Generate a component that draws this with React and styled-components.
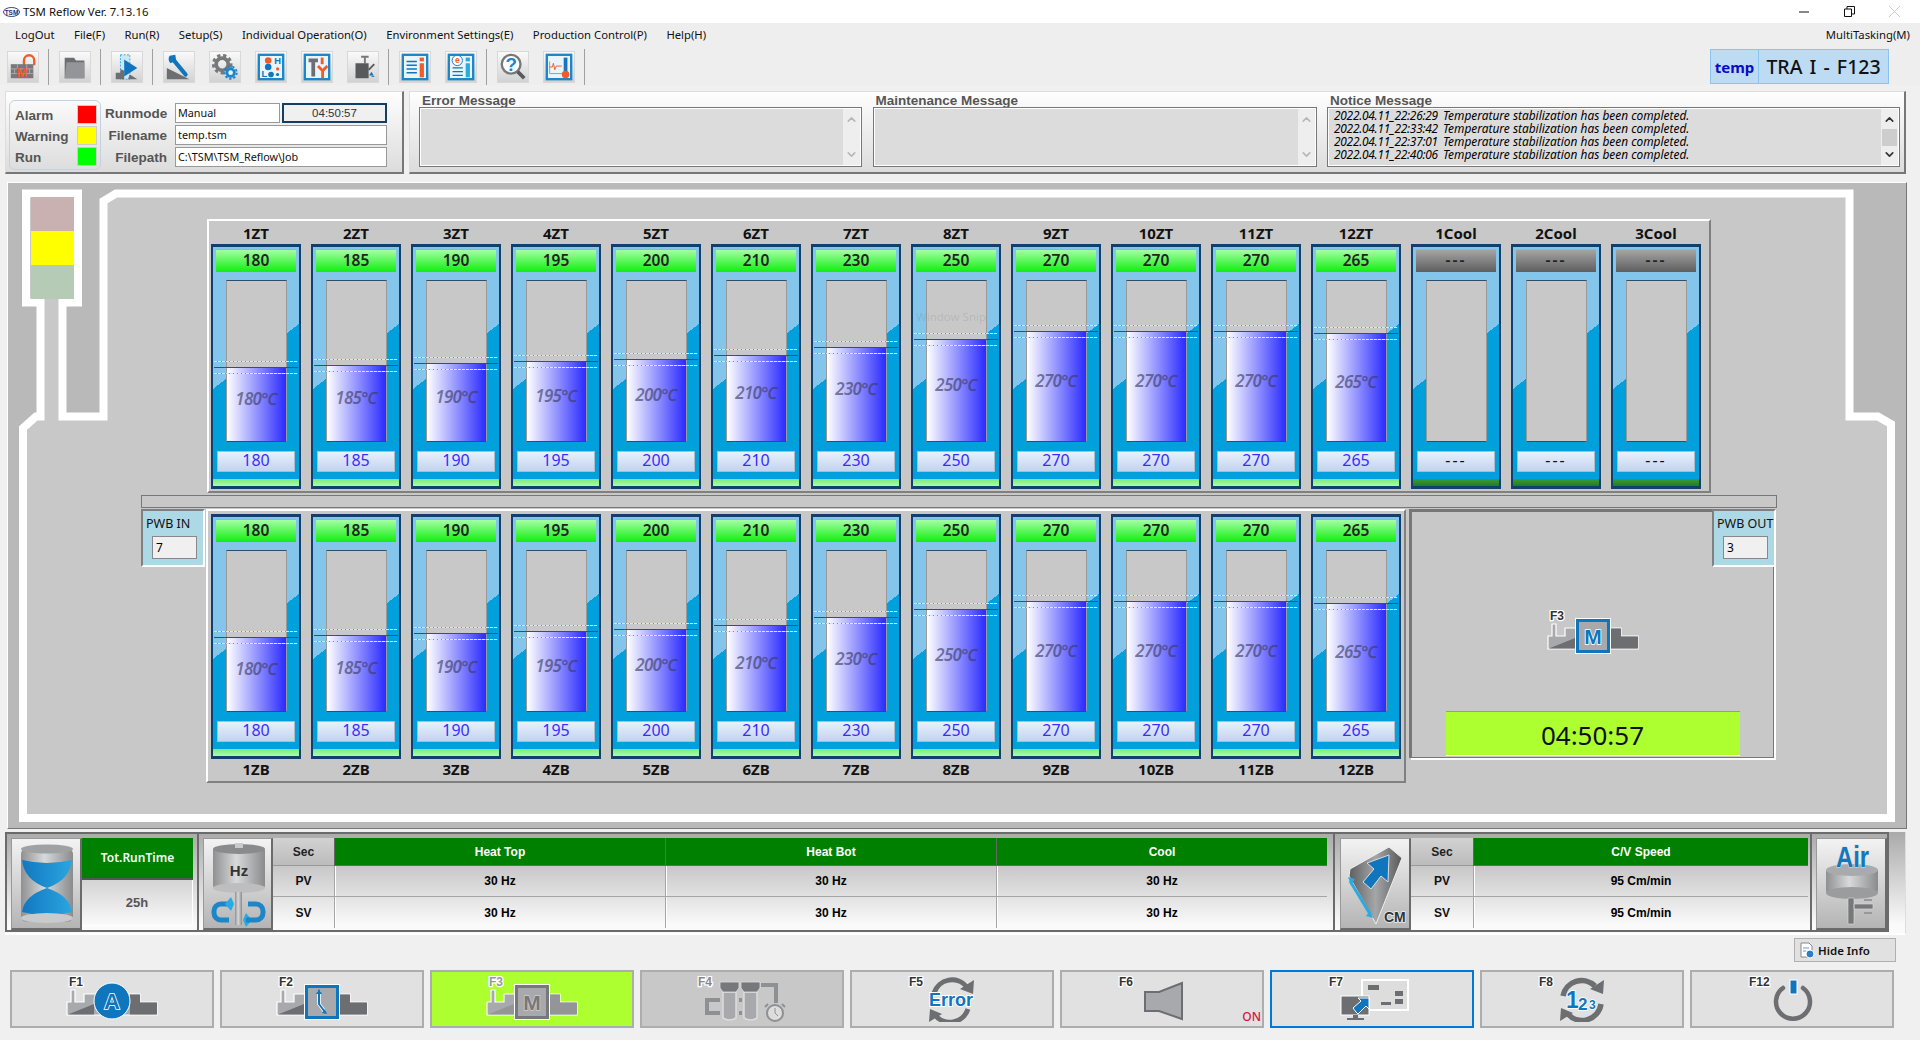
import React from 'react'
import styled, { createGlobalStyle } from 'styled-components'
import { ChevronUp, ChevronDown } from 'lucide-react'

const ui = `"Noto Sans", "Noto Sans CJK SC", sans-serif`
const arial = `"Liberation Sans", Arial, sans-serif`

const GlobalStyle = createGlobalStyle`
  html, body { margin: 0; padding: 0; background: #f0f0f0; }
  body { width: 1920px; height: 1040px; overflow: hidden; font-family: ${ui}; }
  * { box-sizing: border-box; }
`

const menus = ['LogOut', 'File(F)', 'Run(R)', 'Setup(S)', 'Individual Operation(O)', 'Environment Settings(E)', 'Production Control(P)', 'Help(H)']
const temps = [180, 185, 190, 195, 200, 210, 230, 250, 270, 270, 270, 265]
const notices = ['2022.04.11_22:26:29', '2022.04.11_22:33:42', '2022.04.11_22:37:01', '2022.04.11_22:40:06']

/* toolbar drawings */
const Frame = ({ children }) => (
  <>
    <rect x="3" y="3" width="26" height="26" fill="#e9f4fb" stroke="#1c86c8" strokeWidth="2.5" />
    {children}
  </>
)
const toolIcons = [
  <><path d="M17 14V9a5.5 5.5 0 0 1 11 0v5" fill="none" stroke="#f15a29" strokeWidth="2.5" /><rect x="3" y="13" width="24" height="15" fill="#77787b" /><path d="M3 18h24M3 23h24M10 13v5M20 13v5M7 18v5M23 18v5" stroke="#aaa" /><text x="15" y="27" textAnchor="middle" fontFamily={arial} fontWeight="700" fontSize="14" fill="#f15a29">M</text></>,
  <><path d="M5 6h10l2 3h9v19H5z" fill="#6d6e71" /><path d="M7 11h19v17H5z" fill="#939598" /></>,
  <><rect x="9" y="3" width="10" height="26" fill="#cfe6f5" stroke="#29abe2" strokeDasharray="2 1.5" /><path d="M4 29v-7h5v-4l4 2v9z" fill="#6d6e71" /><path d="M19 24l8 5H17z" fill="#6d6e71" /><path d="M13 8l14 9-14 9z" fill="#0f75bc" /></>,
  <><path d="M3 29V17l24 12z" fill="#6d6e71" /><path d="M9 7l14 17" stroke="#0f75bc" strokeWidth="4.5" strokeLinecap="round" /><path d="M6 4a6 6 0 0 0 1 8l6-3-1-6z" fill="#0f75bc" /></>,
  <><circle cx="13" cy="13" r="6.5" fill="none" stroke="#77787b" strokeWidth="4" /><circle cx="13" cy="13" r="9.5" fill="none" stroke="#77787b" strokeWidth="3" strokeDasharray="3.5 3" /><circle cx="22" cy="22" r="4" fill="#e9f4fb" stroke="#1c86c8" strokeWidth="3" /><circle cx="22" cy="22" r="6.5" fill="none" stroke="#1c86c8" strokeWidth="2" strokeDasharray="2.5 2" /></>,
  <Frame><circle cx="13" cy="9" r="3.5" fill="#f15a29" /><circle cx="13" cy="16" r="3.5" fill="#0f75bc" /><text x="23" y="13" textAnchor="middle" fontFamily={arial} fontWeight="700" fontSize="10" fill="#0f75bc">H</text><text x="9" y="27" textAnchor="middle" fontFamily={arial} fontWeight="700" fontSize="10" fill="#0f75bc">L</text><circle cx="16" cy="24" r="3" fill="#0f75bc" /><circle cx="23" cy="18" r="1.7" fill="#f15a29" /><circle cx="23" cy="24" r="1.7" fill="#0f75bc" /></Frame>,
  <Frame><path d="M7 7h10v4h-3v15h-4V11H7z" fill="#6d6e71" /><path d="M20 6h3v7h-3z" fill="#f15a29" /><path d="M17 15l5 5 5-5M22 20v8" fill="none" stroke="#f15a29" strokeWidth="3" /></Frame>,
  <><path d="M14 4h8v2h-3v6h-2V6h-3z" fill="#77787b" /><rect x="8" y="12" width="14" height="16" fill="#58595b" /><path d="M22 19l6-6" stroke="#58595b" strokeWidth="2" /><path d="M25 21l2.5 4h-5z" fill="#0f75bc" /><path d="M25 26h3" stroke="#0f75bc" /></>,
  <Frame><path d="M7 10h11M7 14h11M7 18h11M7 22h11" stroke="#0f75bc" strokeWidth="1.6" /><rect x="21" y="12" width="4.5" height="15" fill="#f15a29" /><rect x="21" y="6" width="4.5" height="4" fill="#f15a29" /></Frame>,
  <Frame><path d="M7 17h11M7 21h11M7 25h11" stroke="#0f75bc" strokeWidth="1.3" /><circle cx="12" cy="9" r="5.5" fill="#fff" stroke="#0f75bc" /><text x="12" y="12" textAnchor="middle" fontFamily={arial} fontWeight="700" fontSize="9" fill="#f15a29">e</text><rect x="21" y="12" width="4.5" height="15" fill="#29abe2" /><rect x="21" y="6" width="4.5" height="4" fill="#29abe2" /></Frame>,
  <><circle cx="14" cy="13" r="10" fill="#fff" stroke="#77787b" strokeWidth="2.5" /><path d="M21 21l7 7" stroke="#58595b" strokeWidth="4" /><text x="14" y="20" textAnchor="middle" fontFamily={arial} fontWeight="700" fontSize="20" fill="#1c86c8">?</text></>,
  <Frame><path d="M6 23h14M6 10v13" stroke="#999" /><path d="M6 16h3l1-4 1.5 7 1.5-4h6" fill="none" stroke="#f15a29" /><rect x="21" y="6" width="4" height="16" fill="#1c75bc" /><circle cx="23" cy="24" r="4" fill="#f15a29" /></Frame>,
]

const Silhouette = ({ light = '#a7a9ac', dark = '#6d6e71' }) => (
  <>
    <path d="M1 39V26h4V14h4v12h9v-8h56v8h17v13z" fill={light} stroke="#fff" strokeWidth="1.2" />
    <path d="M2 38.5L28 28v10.5z" fill={dark} />
    <path d="M64 18.5h10v8h17v12H64z" fill={dark} />
  </>
)
const KeyText = ({ x = 3, fill = '#333', children }) => (
  <text x={x} y="10" fontFamily={arial} fontWeight="700" fontSize="12" fill={fill} stroke="#fff" strokeWidth="2.5" paintOrder="stroke">{children}</text>
)
const IconBox = ({ stroke = '#0f75bc', fill = '#a7a9ac', children }) => (
  <>
    <rect x="28" y="8" width="36" height="36" fill="#fff" />
    <rect x="30.5" y="10.5" width="31" height="31" fill={fill} stroke={stroke} strokeWidth="3" />
    {children}
  </>
)
const KeySvg = ({ children }) => <svg width="92" height="46" viewBox="0 0 92 46">{children}</svg>

const ManualIcon = () => (
  <KeySvg>
    <KeyText>F3</KeyText>
    <Silhouette />
    <IconBox><text x="46" y="34" textAnchor="middle" fontFamily={arial} fontWeight="700" fontSize="21" fill="#0f75bc" stroke="#fff" strokeWidth="1.5" paintOrder="stroke">M</text></IconBox>
  </KeySvg>
)

const fkeys = [
  { id: 'F1', icon: <KeySvg><KeyText>F1</KeyText><Silhouette /><circle cx="46" cy="25" r="18" fill="#0f75bc" stroke="#fff" /><text x="46" y="33" textAnchor="middle" fontFamily={arial} fontWeight="700" fontSize="22" fill="#0f75bc" stroke="#fff" strokeWidth="1.6" paintOrder="stroke">A</text></KeySvg> },
  { id: 'F2', icon: <KeySvg><KeyText>F2</KeyText><Silhouette /><IconBox><path d="M43 15v13l6 8" fill="none" stroke="#fff" strokeWidth="3.5" /><path d="M43 15v13l6 8" fill="none" stroke="#0f75bc" strokeWidth="2" /><path d="M43 13l-3 5h6zM51 38l-5-1 3-4z" fill="#0f75bc" /></IconBox></KeySvg> },
  { id: 'F3', active: true, icon: <KeySvg><KeyText fill="#999">F3</KeyText><Silhouette light="#a7a9ac" dark="#939598" /><IconBox stroke="#77787b"><text x="46" y="34" textAnchor="middle" fontFamily={arial} fontWeight="700" fontSize="21" fill="#77787b" stroke="#ccc" strokeWidth="1.5" paintOrder="stroke">M</text></IconBox></KeySvg> },
  { id: 'F4', off: true, icon: <KeySvg><KeyText x={2} fill="#888">F4</KeyText>
    <path d="M24 24H11V37H24M65 9H80V27M43 24h3M43 37h3" fill="none" stroke="#8f9092" strokeWidth="4" />
    <path d="M27 16h13v26q-6.5 4-13 0zM48 16h13v26q-6.5 4-13 0z" fill="#a7a9ac" stroke="#ddd" strokeWidth="1.5" />
    <path d="M24 6h19v6l-3 4H27l-3-4zM45 6h19v6l-3 4H48l-3-4z" fill="#77787b" stroke="#ddd" strokeWidth=".8" />
    <circle cx="79" cy="37" r="8" fill="#ddd" stroke="#8f9092" strokeWidth="2" /><path d="M79 32v5l3 3" fill="none" stroke="#8f9092" /><path d="M72 28l-3 3M86 28l3 3" stroke="#8f9092" strokeWidth="2" />
  </KeySvg> },
  { id: 'F5', icon: <KeySvg><KeyText>F5</KeyText>
    <path d="M28 17a19 19 0 0 1 33-6" fill="none" stroke="#6d6e71" strokeWidth="5" /><path d="M68 4l-1 14-13-5z" fill="#6d6e71" />
    <path d="M62 33a19 19 0 0 1-33 6" fill="none" stroke="#6d6e71" strokeWidth="5" /><path d="M23 46l1-13 12 5z" fill="#6d6e71" />
    <text x="45" y="30" textAnchor="middle" fontFamily={arial} fontWeight="700" fontSize="18" fill="#0f75bc" stroke="#fff" strokeWidth="2" paintOrder="stroke">Error</text>
  </KeySvg> },
  { id: 'F6', on: true, icon: <KeySvg><KeyText>F6</KeyText><path d="M29 16h14l23-9v36l-23-8H29z" fill="#a7a9ac" stroke="#6d6e71" strokeWidth="2" /></KeySvg> },
  { id: 'F7', focus: true, icon: <KeySvg><KeyText>F7</KeyText>
    <rect x="36" y="4" width="46" height="30" fill="#ddd" stroke="#fff" strokeWidth="2" />
    <path d="M42 9h11v5H42zM69 15h8v5h-8zM69 23h8v5h-8zM55 26h10v3H55z" fill="#6d6e71" />
    <rect x="15" y="20" width="28" height="19" fill="#6d6e71" stroke="#fff" /><path d="M27 39h5v3h6v2H21v-2h6z" fill="#6d6e71" />
    <path d="M30 36l-3-4 8-7-3-3h11v11l-3-3-8 8z" fill="#0f75bc" stroke="#fff" />
  </KeySvg> },
  { id: 'F8', icon: <KeySvg><KeyText>F8</KeyText>
    <path d="M27 20a19 19 0 0 1 32-10" fill="none" stroke="#6d6e71" strokeWidth="5.5" /><path d="M68 4l-1 14-13-5z" fill="#6d6e71" />
    <path d="M65 28a19 19 0 0 1-33 10" fill="none" stroke="#6d6e71" strokeWidth="5.5" /><path d="M24 45l1-13 12 5z" fill="#6d6e71" />
    <text x="30" y="32" fontFamily={arial} fontWeight="700" fontSize="23" fill="#0f75bc" stroke="#fff" strokeWidth="1.5" paintOrder="stroke">1</text>
    <text x="42" y="34" fontFamily={arial} fontWeight="700" fontSize="17" fill="#0f75bc" stroke="#fff" strokeWidth="1.5" paintOrder="stroke">2</text>
    <text x="53" y="33" fontFamily={arial} fontWeight="700" fontSize="12" fill="#0f75bc" stroke="#fff" strokeWidth="1.5" paintOrder="stroke">3</text>
  </KeySvg> },
  { id: 'F12', icon: <KeySvg><KeyText>F12</KeyText><path d="M37 12a17 17 0 1 0 20 0" fill="none" stroke="#6d6e71" strokeWidth="4.5" strokeLinecap="round" /><rect x="44" y="4" width="7" height="14" fill="#0f75bc" stroke="#fff" /></KeySvg> },
]

const Metal = ({ id }) => (
  <defs>
    <linearGradient id={id} x1="0" x2="1" y1="0" y2="0">
      <stop offset="0" stopColor="#8f9092" /><stop offset="0.45" stopColor="#d8d9da" /><stop offset="1" stopColor="#8a8b8d" />
    </linearGradient>
    <linearGradient id={`${id}b`} x1="0" x2="1" y1="0" y2="0">
      <stop offset="0" stopColor="#1277c0" /><stop offset="1" stopColor="#2aa6e0" />
    </linearGradient>
    <linearGradient id={`${id}d`} x1="0" x2="1" y1="0" y2="0">
      <stop offset="0" stopColor="#5d5e60" /><stop offset="0.5" stopColor="#a5a6a8" /><stop offset="1" stopColor="#58595b" />
    </linearGradient>
  </defs>
)

const HourglassIcon = () => (
  <svg width="67" height="88" viewBox="0 0 67 88">
    <Metal id="hg" />
    <rect x="8" y="8" width="52" height="74" rx="6" fill="url(#hg)" />
    <ellipse cx="34" cy="9" rx="26" ry="4.5" fill="#a0a1a3" />
    <path d="M9 20q25 6 50 0q-2 20-25 28q-23-8-25-28z" fill="url(#hgb)" />
    <path d="M34 48q23 8 25 24q-25 7-50 0q2-16 25-24z" fill="url(#hgb)" />
    <ellipse cx="34" cy="78" rx="26" ry="5" fill="#c9cacb" />
  </svg>
)
const HzIcon = () => (
  <svg width="66" height="88" viewBox="0 0 66 88">
    <Metal id="hz" />
    <rect x="8" y="7" width="52" height="42" rx="4" fill="url(#hz)" />
    <ellipse cx="34" cy="9" rx="26" ry="5" fill="#8a8b8d" />
    <rect x="30" y="3" width="8" height="5" fill="#c9cacb" />
    <ellipse cx="34" cy="48" rx="26" ry="5" fill="#bdbec0" />
    <text x="34" y="36" textAnchor="middle" fontFamily={arial} fontWeight="700" fontSize="15" fill="#333">Hz</text>
    <rect x="30" y="52" width="7" height="33" fill="url(#hz)" />
    <path d="M26 64H16a7 7 0 0 0-7 7v2a7 7 0 0 0 7 7h8" fill="none" stroke="#1c86c8" strokeWidth="5" />
    <path d="M26 57l3 7-3 7-6-7zM41 73l-3 7 3 7 6-7z" fill="#29abe2" />
    <path d="M41 80h10a7 7 0 0 0 7-7v-2a7 7 0 0 0-7-7h-8" fill="none" stroke="#1c86c8" strokeWidth="5" />
  </svg>
)
const CmIcon = () => (
  <svg width="67" height="88" viewBox="0 0 67 88">
    <Metal id="cm" />
    <path d="M47 7l13 11-26 66L7 36l1-7z" fill="url(#cmd)" stroke="#eee" />
    <path d="M47 15l-1 27-7-6-10 13-8-7 11-13-7-6z" fill="#0f75bc" stroke="#ddd" />
    <path d="M8 41l20 33" stroke="#29abe2" strokeWidth="3" />
    <path d="M6 37l7 2-4 6zM31 78l-7-2 4-5z" fill="#29abe2" />
    <text x="42" y="82" fontFamily={arial} fontWeight="700" fontSize="14" fill="#333" stroke="#eee" strokeWidth="1.5" paintOrder="stroke">CM</text>
  </svg>
)
const AirIcon = () => (
  <svg width="67" height="88" viewBox="0 0 67 88">
    <Metal id="air" />
    <rect x="8" y="28" width="52" height="26" rx="4" fill="url(#air)" />
    <ellipse cx="34" cy="30" rx="26" ry="6" fill="#a9aaac" />
    <ellipse cx="34" cy="53" rx="26" ry="6" fill="#9b9c9e" />
    <text x="18" y="27" textLength="33" lengthAdjust="spacingAndGlyphs" fontFamily={arial} fontWeight="700" fontSize="29" fill="#1277c0" stroke="#ddd" strokeWidth="1" paintOrder="stroke">Air</text>
    <path d="M30 58h6v26h-6zM36 64h19v5H36z" fill="#77787b" stroke="#ddd" strokeWidth=".6" />
    <path d="M46 60h8M46 73h8" stroke="#999" strokeWidth="2" />
  </svg>
)

const Zone = ({ label, value, bottom, ghost }) => {
  const idle = value == null
  const level = idle ? 0 : value * 0.405
  return (
    <ZoneColumn>
      {!bottom && <ZoneLabel>{label}</ZoneLabel>}
      <ZoneCard>
        <PvBox $idle={idle}>{idle ? '---' : value}</PvBox>
        <TempBar>
          {!idle && (
            <>
              <TempFill style={{ height: level }}><TempText>{value}℃</TempText></TempFill>
              <Limit style={{ bottom: level + 6 }} />
              <SetLine style={{ bottom: level }} />
              <Limit style={{ bottom: level - 6 }} />
            </>
          )}
        </TempBar>
        <SvBox $idle={idle}>{idle ? '---' : value}</SvBox>
        <StatusStrip $idle={idle} />
        {ghost && <GhostText>{ghost}</GhostText>}
      </ZoneCard>
      {bottom && <ZoneLabel $bottom>{label}</ZoneLabel>}
    </ZoneColumn>
  )
}

const DataTable = ({ cols, values, wide }) => (
  <DataGrid $wide={wide}>
    <SecCell>Sec</SecCell>
    {cols.map((c) => <HeadCell key={c}>{c}</HeadCell>)}
    <RowCell>PV</RowCell>
    {cols.map((c) => <ValueCell key={c}>{values}</ValueCell>)}
    <RowCell $last>SV</RowCell>
    {cols.map((c) => <ValueCell key={c} $last>{values}</ValueCell>)}
  </DataGrid>
)

const Message = ({ title, width, active, children }) => (
  <MessageGroup style={{ width }}>
    <MessageTitle>{title}</MessageTitle>
    <MessageBox>
      <MessageBody>{children}</MessageBody>
      <ScrollTrack $active={active}>
        <ChevronUp size={13} strokeWidth={3} />
        {active && <ScrollThumb />}
        <ChevronDown size={13} strokeWidth={3} />
      </ScrollTrack>
    </MessageBox>
  </MessageGroup>
)

export default function App() {
  return (
    <Page>
      <GlobalStyle />
      <TitleBar>
        <svg width="17" height="10" viewBox="0 0 17 10"><ellipse cx="8.5" cy="5" rx="8" ry="4.5" fill="#fff" stroke="#3a3f7a" /><text x="8.5" y="7.5" textAnchor="middle" fontFamily={arial} fontWeight="700" fontSize="6.5" fill="#2a2f6a">TSM</text></svg>
        <TitleText>TSM Reflow Ver. 7.13.16</TitleText>
        <WindowButtons>
          <svg width="11" height="11" viewBox="0 0 11 11"><path d="M0 6h10" stroke="#111" /></svg>
          <svg width="11" height="11" viewBox="0 0 11 11"><path d="M.5 3h7v7.5h-7zM3 3V.5h7.5V8H8" fill="none" stroke="#111" /></svg>
          <svg width="11" height="11" viewBox="0 0 11 11"><path d="M0 0l11 11M11 0L0 11" stroke="#ccc" /></svg>
        </WindowButtons>
      </TitleBar>

      <MenuBar>
        {menus.map((m) => <MenuItem key={m}>{m}</MenuItem>)}
        <MenuEnd>MultiTasking(M)</MenuEnd>
      </MenuBar>

      <ToolRow>
        {toolIcons.map((icon, i) => (
          <React.Fragment key={i}>
            <ToolButton><svg width="30" height="30" viewBox="0 0 32 32">{icon}</svg></ToolButton>
            {[0, 1, 2, 7, 9, 11].includes(i) && <ToolDivider />}
          </React.Fragment>
        ))}
        <Brand>
          <BrandTemp>temp</BrandTemp>
          <BrandName>TRA I - F123</BrandName>
        </Brand>
      </ToolRow>

      <InfoRow>
        <StatusPanel>
          <AlarmBox>
            <AlarmLabel>Alarm</AlarmLabel><Lamp $color="#ff0000" />
            <AlarmLabel>Warning</AlarmLabel><Lamp $color="#ffff00" />
            <AlarmLabel>Run</AlarmLabel><Lamp $color="#00ff00" />
          </AlarmBox>
          <FieldGrid>
            <FieldLabel>Runmode</FieldLabel><Field>Manual</Field><TimeField>04:50:57</TimeField>
            <FieldLabel>Filename</FieldLabel><Field $span>temp.tsm</Field>
            <FieldLabel>Filepath</FieldLabel><Field $span>C:\TSM\TSM_Reflow\Job</Field>
          </FieldGrid>
        </StatusPanel>
        <MessagePanel>
          <Message title="Error Message" width={443} />
          <Message title="Maintenance Message" width={444} />
          <Message title="Notice Message" width={573} active>
            {notices.map((n) => (
              <NoticeLine key={n}><span>{n}</span><span>Temperature stabilization has been completed.</span></NoticeLine>
            ))}
          </Message>
        </MessagePanel>
      </InfoRow>

      <MainPanel>
        <Backdrop width="1898" height="645" viewBox="0 0 1898 645">
          <path d="M95.5 233.5V18L108 10.5H1841.5V233.5H1870L1883 241V635H15V245L28 233.5H32.5V119.5H18V10.5H70V119.5H54.5V233.5Z" fill="#c8c8c8" stroke="#fff" strokeWidth="8" strokeLinejoin="miter" />
          <rect x="23" y="14" width="43" height="34" fill="#c9b1b1" />
          <rect x="23" y="48" width="43" height="34" fill="#ffff00" />
          <rect x="23" y="82" width="43" height="34" fill="#b5cbb5" />
        </Backdrop>
        <TopFrame>
          {temps.map((t, i) => <Zone key={i} label={`${i + 1}ZT`} value={t} ghost={i === 7 ? 'Window Snip' : undefined} />)}
          {[1, 2, 3].map((n) => <Zone key={n} label={`${n}Cool`} />)}
        </TopFrame>
        <MiddleBar />
        <LowerRow>
          <PwbBox>
            <PwbLabel>PWB IN</PwbLabel>
            <PwbInput>7</PwbInput>
          </PwbBox>
          <BottomFrame>
            {temps.map((t, i) => <Zone key={i} label={`${i + 1}ZB`} value={t} bottom />)}
          </BottomFrame>
          <ModePanel>
            <PwbOut>
              <PwbLabel>PWB OUT</PwbLabel>
              <PwbInput>3</PwbInput>
            </PwbOut>
            <ManualIcon />
            <Timer>04:50:57</Timer>
          </ModePanel>
        </LowerRow>
      </MainPanel>

      <DataRow>
        <DataCell $first $left={4} $right={4}>
          <MetalButton><HourglassIcon /></MetalButton>
          <RunColumn>
            <RunHead>Tot.RunTime</RunHead>
            <RunValue>25h</RunValue>
          </RunColumn>
        </DataCell>
        <DataCell $left={4} $right={6}>
          <MetalButton $w={70}><HzIcon /></MetalButton>
          <DataTable cols={['Heat Top', 'Heat Bot', 'Cool']} values="30 Hz" />
        </DataCell>
        <DataCell $left={5} $right={2}>
          <MetalButton><CmIcon /></MetalButton>
          <DataTable cols={['C/V Speed']} values="95 Cm/min" wide />
        </DataCell>
        <DataCell $left={4} $right={0}>
          <MetalButton><AirIcon /></MetalButton>
        </DataCell>
      </DataRow>

      <HideRow>
        <HideButton>
          <svg width="17" height="17" viewBox="0 0 17 17"><path d="M3 1h8l3 3v11H3z" fill="#fff" stroke="#888" /><path d="M5 6h6M5 9h3" stroke="#6a9bc8" /><circle cx="12" cy="12" r="4" fill="#2a7fc8" stroke="#fff" /></svg>
          Hide Info
        </HideButton>
      </HideRow>

      <FKeyRow>
        {fkeys.map((k) => (
          <FKey key={k.id} $active={k.active} $off={k.off} $focus={k.focus}>
            {k.icon}
            {k.on && <OnTag>ON</OnTag>}
          </FKey>
        ))}
      </FKeyRow>
    </Page>
  )
}

const Page = styled.div`
  width: 1920px;
  height: 1040px;
  display: flex;
  flex-direction: column;
  background: #f0f0f0;
`

const TitleBar = styled.div`
  height: 23px;
  display: flex;
  align-items: center;
  background: #fff;
  padding-left: 3px;
`

const TitleText = styled.span`
  margin-left: 3px;
  font-size: 11.4px;
  color: #111;
`

const WindowButtons = styled.div`
  margin-left: auto;
  margin-right: 20px;
  display: flex;
  gap: 34px;
`

const MenuBar = styled.div`
  height: 25px;
  display: flex;
  align-items: center;
  padding: 0 10px 2px 15px;
  gap: 19.5px;
  background: #eee;
`

const MenuItem = styled.span`
  font-size: 11.3px;
  color: #111;
`

const MenuEnd = styled(MenuItem)`
  margin-left: auto;
`

const ToolRow = styled.div`
  height: 37px;
  display: flex;
  align-items: center;
  padding-left: 7px;
  background: #eee;
`

const ToolButton = styled.div`
  width: 32px;
  height: 32px;
  margin-right: 14px;
  display: flex;
  align-items: center;
  justify-content: center;
  background: linear-gradient(#fafafa, #d2d2d2);
  border: 1px solid #d8d8d8;
`

const ToolDivider = styled.div`
  width: 1px;
  height: 36px;
  margin: 0 10px 0 -5px;
  background: #a0a0a0;
`

const Brand = styled.div`
  margin-left: auto;
  margin-right: 31px;
  height: 35px;
  display: flex;
  background: #bddcf3;
  border: 1px solid #8cc3f0;
`

const BrandTemp = styled.div`
  width: 48px;
  display: flex;
  align-items: center;
  justify-content: center;
  border-right: 1px solid #8cc3f0;
  font-size: 15px;
  font-weight: 700;
  color: #0a0ac8;
`

const BrandName = styled.div`
  width: 129px;
  display: flex;
  align-items: center;
  justify-content: center;
  font-size: 19.5px;
  font-weight: 500;
  word-spacing: 2px;
  color: #111;
`

const InfoRow = styled.div`
  margin-top: 6px;
  height: 83px;
  display: flex;
  gap: 5px;
  padding-left: 5px;
`

const raised = `
  background: linear-gradient(#fefefe, #dcdcdc);
  border-top: 1px solid #ddd;
  border-left: 1px solid #ddd;
  border-right: 2px solid #777;
  border-bottom: 2px solid #777;
`

const StatusPanel = styled.div`
  ${raised}
  width: 399px;
  display: flex;
  align-items: flex-start;
  padding: 8px 0 0 3px;
`

const AlarmBox = styled.div`
  width: 92px;
  height: 70px;
  display: grid;
  grid-template-columns: 1fr 20px;
  grid-auto-rows: 19px;
  row-gap: 2px;
  align-items: center;
  padding: 4px 3px 0 5px;
  border: 1px solid #c4d2e0;
  border-radius: 6px;
`

const AlarmLabel = styled.span`
  padding-top: 1px;
  font: 700 13.5px ${arial};
  color: #555;
`

const Lamp = styled.div`
  height: 19px;
  background: ${(p) => p.$color};
  border: 1px solid #ccc;
`

const FieldGrid = styled.div`
  margin: 3px 0 0 4px;
  display: grid;
  grid-template-columns: 70px 105px 107px;
  grid-auto-rows: 20px;
  row-gap: 2px;
`

const FieldLabel = styled.div`
  padding-right: 8px;
  text-align: right;
  white-space: nowrap;
  font: 700 13.5px/22px ${arial};
  color: #555;
`

const Field = styled.div`
  grid-column: ${(p) => (p.$span ? '2 / 4' : 'auto')};
  padding-left: 2px;
  font: 10.8px/17px ${ui};
  color: #111;
  background: #fff;
  border: 1px solid #999;
`

const TimeField = styled.div`
  margin-left: 2px;
  text-align: center;
  font: 11.5px/16px ${arial};
  color: #333;
  background: #f0f0f0;
  border: 2px solid #123f66;
`

const MessagePanel = styled.div`
  ${raised}
  width: 1497px;
  display: flex;
  gap: 10.5px;
  padding-left: 9px;
`

const MessageGroup = styled.div`
  display: flex;
  flex-direction: column;
`

const MessageTitle = styled.div`
  height: 15px;
  padding-left: 3px;
  font: 700 13.5px/18px ${arial};
  color: #555;
`

const MessageBox = styled.div`
  height: 60px;
  display: flex;
  border: 1px solid #777;
  background: #dcdcdc;
  box-shadow: inset 0 0 0 1px #fff;
  padding: 1px;
`

const MessageBody = styled.div`
  flex: 1;
  padding-left: 5px;
`

const ScrollTrack = styled.div`
  width: 17px;
  display: flex;
  flex-direction: column;
  align-items: center;
  justify-content: space-between;
  padding: 4px 0;
  background: #eee;
  color: ${(p) => (p.$active ? '#333' : '#b8b8b8')};
`

const ScrollThumb = styled.div`
  width: 15px;
  height: 17px;
  background: #cdcdcd;
`

const NoticeLine = styled.div`
  display: flex;
  gap: 8px;
  height: 13px;
  font-size: 11.9px;
  line-height: 13px;
  font-style: italic;
  color: #000;
  white-space: nowrap;
  span:first-child { width: 101px; letter-spacing: -0.25px; }
`

const MainPanel = styled.div`
  position: relative;
  margin: 8px 0 0 7px;
  width: 1900px;
  height: 647px;
  background: #b9b9b9;
  border-top: 1px solid #fff;
  border-left: 1px solid #fff;
  border-right: 1px solid #777;
  border-bottom: 1px solid #777;
`

const Backdrop = styled.svg`
  position: absolute;
  top: 0;
  left: 0;
`

const zoneFrame = `
  position: relative;
  display: flex;
  gap: 10px;
  height: 274px;
  border-top: 2px solid #fff;
  border-left: 2px solid #fff;
  border-right: 2px solid #808080;
  border-bottom: 2px solid #808080;
`

const TopFrame = styled.div`
  ${zoneFrame}
  margin: 36px 0 0 199px;
  width: 1504px;
  padding-left: 2px;
`

const MiddleBar = styled.div`
  position: relative;
  margin: 2px 0 0 133px;
  width: 1636px;
  height: 13px;
  border: 1px solid #777;
`

const LowerRow = styled.div`
  position: relative;
  margin: 1px 0 0 133px;
  display: flex;
  align-items: flex-start;
`

const BottomFrame = styled.div`
  ${zoneFrame}
  margin-left: 1px;
  width: 1200px;
  padding: 3px 0 0 3px;
`

const ZoneColumn = styled.div`
  width: 90px;
  display: flex;
  flex-direction: column;
  align-items: center;
`

const ZoneLabel = styled.div`
  height: 23px;
  font-size: 15px;
  font-weight: 700;
  line-height: ${(p) => (p.$bottom ? '20px' : '25px')};
  color: #111;
`

const ZoneCard = styled.div`
  position: relative;
  width: 90px;
  height: 245px;
  flex: none;
  display: flex;
  flex-direction: column;
  align-items: center;
  padding-top: 2px;
  border: solid #12406c;
  border-width: 3px 2px;
  background: linear-gradient(323deg, #00a0dc 53.3%, #84c5ec 53.3%);
`

const PvBox = styled.div`
  width: 80px;
  height: 23px;
  text-align: center;
  font-size: 15.5px;
  font-weight: 600;
  line-height: 20px;
  letter-spacing: ${(p) => (p.$idle ? '2px' : '0')};
  color: #222;
  background: ${(p) => (p.$idle ? 'linear-gradient(#a4a4a4, #5e5e5e)' : 'linear-gradient(#a4ffa4, #10ee10)')};
  border-top: 1px solid #9cb8a4;
`

const TempBar = styled.div`
  position: relative;
  width: 61px;
  height: 162px;
  margin-top: 8px;
  background: #c8c8c8;
  border: 1px solid #999;
  border-top-color: #2d4f6e;
  border-bottom-color: #2d4f6e;
`

const TempFill = styled.div`
  position: absolute;
  left: 0;
  right: 0;
  bottom: 0;
  display: flex;
  align-items: center;
  justify-content: center;
  padding-bottom: 12px;
  background: linear-gradient(90deg, #fff, #2a2aff);
`

const TempText = styled.span`
  font-size: 17px;
  font-style: italic;
  font-weight: 600;
  letter-spacing: -0.7px;
  white-space: nowrap;
  color: rgba(60, 60, 100, 0.65);
`

const SetLine = styled.div`
  position: absolute;
  left: -13px;
  right: -12px;
  height: 1px;
  background: #008000;
`

const Limit = styled.div`
  position: absolute;
  left: -13px;
  right: -12px;
  height: 1px;
  background: repeating-linear-gradient(90deg, #ffff00 0 3px, #ff40c0 3px 4px);
`

const GhostText = styled.span`
  position: absolute;
  left: 3px;
  top: 62px;
  font-size: 11.5px;
  white-space: nowrap;
  color: rgba(120, 120, 120, 0.22);
`

const SvBox = styled.div`
  width: 78px;
  height: 21px;
  margin-top: 9px;
  text-align: center;
  font-size: 16px;
  line-height: 17px;
  letter-spacing: ${(p) => (p.$idle ? '2px' : '0')};
  color: ${(p) => (p.$idle ? '#111' : '#3b2cff')};
  background: linear-gradient(#e8f0fc, #c2d4ef);
  border: 1px solid #aebbcb;
`

const StatusStrip = styled.div`
  width: 100%;
  height: 7px;
  margin-top: auto;
  background: ${(p) => (p.$idle ? 'linear-gradient(#3b9b3b, #237a23)' : 'linear-gradient(#7fe87f, #a8ffa8)')};
`

const pwb = `
  display: flex;
  flex-direction: column;
  height: 58px;
  padding: 5px 0 0 3px;
  background: #add8e6;
  border-top: 2px solid #808080;
  border-left: 2px solid #808080;
  border-right: 2px solid #fff;
  border-bottom: 2px solid #fff;
`

const PwbBox = styled.div`
  ${pwb}
  width: 64px;
`

const PwbOut = styled.div`
  ${pwb}
  position: absolute;
  top: -3px;
  right: -3px;
  width: 64px;
`

const PwbLabel = styled.div`
  font-size: 12.5px;
  line-height: 16px;
  white-space: nowrap;
  color: #111;
`

const PwbInput = styled.div`
  width: 45px;
  height: 23px;
  margin: 4px 0 0 6px;
  padding-left: 3px;
  font-size: 12px;
  line-height: 21px;
  background: #f0f0f0;
  border: 1px solid #888;
`

const ModePanel = styled.div`
  position: relative;
  margin-left: 3px;
  width: 365px;
  height: 249px;
  display: flex;
  flex-direction: column;
  align-items: center;
  justify-content: flex-end;
  gap: 55px;
  border: solid #777;
  border-width: 3px 1px 1px 3px;
  box-shadow: 2px 2px 0 #fff;
  padding-bottom: 1px;
`

const Timer = styled.div`
  width: 294px;
  height: 45px;
  text-align: center;
  font-size: 26px;
  line-height: 46px;
  color: #111;
  background: #adff2f;
  border-top: 1px solid #999;
  border-bottom: 1px solid #fff;
`

const DataRow = styled.div`
  margin: 3px 0 0 5px;
  width: 1901px;
  height: 103px;
  display: flex;
  align-items: flex-start;
  background: linear-gradient(#aaa, #fafafa 92%);
  border-bottom: 2px solid #fff;
  border-right: 1px solid #ddd;
`

const DataCell = styled.div`
  height: 100px;
  display: flex;
  align-items: flex-start;
  padding: 4px ${(p) => p.$right}px 0 ${(p) => p.$left}px;
  border: 2px solid #6b6b6b;
  border-left-width: ${(p) => (p.$first ? 2 : 0)}px;
`

const MetalButton = styled.div`
  width: ${(p) => p.$w || 71}px;
  height: 92px;
  flex: none;
  display: flex;
  align-items: center;
  justify-content: center;
  background: linear-gradient(#f3f3f3, #b4b4b4);
  border: 1px solid #999;
  border-right: 2px solid #6b6b6b;
  border-bottom: 2px solid #6b6b6b;
`

const RunColumn = styled.div`
  width: 111px;
  display: flex;
  flex-direction: column;
`

const RunHead = styled.div`
  height: 42px;
  text-align: center;
  font: 600 12px/40px ${ui};
  color: #f4fff4;
  background: #008000;
  border-bottom: 2px solid #555;
`

const RunValue = styled.div`
  height: 46px;
  text-align: center;
  font: 700 13px/46px ${arial};
  color: #555;
  border: solid #fff;
  border-width: 0 1px 1px 0;
`

const DataGrid = styled.div`
  display: grid;
  grid-template-columns: ${(p) => (p.$wide ? '62px 335px' : '61px repeat(3, 331px)')};
  grid-template-rows: 28px 31px 31px;
`

const cell = `
  display: flex;
  align-items: center;
  justify-content: center;
  font: 700 12px ${arial};
`

const SecCell = styled.div`
  ${cell}
  color: #222;
  background: linear-gradient(#d2d2d2, #bcbcbc);
  border-bottom: 1px solid #999;
`

const HeadCell = styled.div`
  ${cell}
  color: #fff;
  background: #008000;
  border-left: 1px solid #666;
  border-bottom: 1px solid #666;
`

const RowCell = styled.div`
  ${cell}
  color: #111;
  ${(p) => (p.$last ? '' : 'border-bottom: 1px solid #a5a5a5;')}
`

const ValueCell = styled.div`
  ${cell}
  color: #000;
  border-left: 1px solid #a5a5a5;
  box-shadow: inset 1px 0 0 #fff;
  ${(p) => (p.$last ? '' : 'border-bottom: 1px solid #a5a5a5;')}
`

const HideRow = styled.div`
  margin-top: 3px;
  height: 24px;
  display: flex;
  justify-content: flex-end;
  padding-right: 24px;
`

const HideButton = styled.div`
  width: 102px;
  height: 24px;
  display: flex;
  align-items: center;
  gap: 3px;
  padding-left: 3px;
  font-size: 11.5px;
  font-weight: 600;
  color: #111;
  background: #e1e1e1;
  border: 1px solid #b0b0b0;
`

const FKeyRow = styled.div`
  margin-top: 8px;
  display: flex;
  gap: 6px;
  padding-left: 10px;
`

const FKey = styled.div`
  position: relative;
  width: 204px;
  height: 58px;
  display: flex;
  align-items: center;
  justify-content: center;
  background: ${(p) => (p.$active ? '#adff2f' : p.$off ? '#c8c8c8' : '#e1e1e1')};
  border: 2px solid ${(p) => (p.$focus ? '#0078d7' : '#adadad')};
`

const OnTag = styled.span`
  position: absolute;
  right: 1px;
  bottom: 1px;
  font-size: 12px;
  font-weight: 500;
  color: #e0103c;
`
